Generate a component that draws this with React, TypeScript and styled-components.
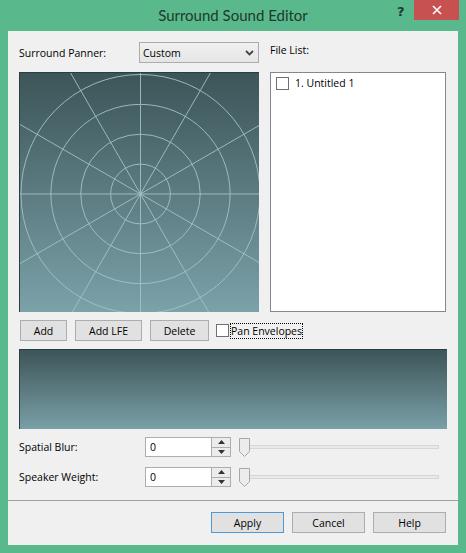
import React from "react";
import styled, { createGlobalStyle } from "styled-components";

const Global = createGlobalStyle`
  html, body { margin: 0; padding: 0; background: #5ab98c; }
  body { font-family: "Open Sans", "Noto Sans", sans-serif; }
  * { box-sizing: border-box; }
`;

const UI_FONT = `"Open Sans", "Noto Sans", sans-serif`;
const TITLE_FONT = `Lato, "Open Sans", sans-serif`;

const Frame = styled.div`
  width: 466px;
  height: 553px;
  background: #5ab98c;
  display: flex;
  flex-direction: column;
  padding: 0 8px 8px 8px;
`;

const TitleBar = styled.div`
  height: 31px;
  display: grid;
  grid-template-columns: 1fr auto 1fr;
  align-items: start;
  margin: 0 -8px;
`;

const TitleText = styled.div`
  grid-column: 2;
  font-family: ${TITLE_FONT};
  font-size: 15px;
  color: #1d3a2d;
  line-height: 31px;
`;

const Controls = styled.div`
  grid-column: 3;
  justify-self: end;
  display: flex;
  align-items: flex-start;
  margin-right: 7px;
`;

const HelpGlyph = styled.div`
  width: 17px;
  height: 21px;
  font-family: "DejaVu Sans", sans-serif;
  font-weight: bold;
  font-size: 13px;
  color: #1d3a2d;
  line-height: 24px;
  text-align: left;
`;

const CloseBtn = styled.div`
  width: 45px;
  height: 20px;
  background: #c75050;
  display: flex;
  align-items: center;
  justify-content: center;
`;

const Client = styled.div`
  flex: 1;
  background: #f0f0f0;
  display: flex;
  flex-direction: column;
`;

const Main = styled.div`
  padding: 11px 12px 13px 11px;
  display: flex;
  flex-direction: column;
`;

const TopGrid = styled.div`
  display: grid;
  grid-template-columns: 240px 176px;
  column-gap: 11px;
  row-gap: 9px;
`;

const LabelRow = styled.div`
  display: flex;
  align-items: center;
  height: 21px;
`;

const Label = styled.span<{ $w?: number }>`
  font-family: ${UI_FONT};
  font-size: 10.5px;
  color: #000;
  width: ${(p) => (p.$w ? `${p.$w}px` : "auto")};
  flex: none;
  white-space: nowrap;
`;

const FileLabel = styled(Label)`
  align-self: flex-start;
  margin-top: 1px;
`;

const Combo = styled.div`
  width: 120px;
  height: 21px;
  border: 1px solid #acacac;
  background: linear-gradient(#f0f0f0, #e5e5e5);
  display: flex;
  align-items: center;
  justify-content: space-between;
  padding: 0 4px 0 3px;
  font-family: ${UI_FONT};
  font-size: 10.5px;
`;

const Panner = styled.div`
  width: 240px;
  height: 240px;
  background: linear-gradient(#3c5558, #7ba1a9);
  border-top: 1px solid #2c3d40;
  border-left: 1px solid #2c3d40;
  overflow: hidden;
  display: flex;
`;

const FileList = styled.div`
  height: 240px;
  background: #fff;
  border: 1px solid #828790;
  padding: 3px 5px;
`;

const FileItem = styled.div`
  display: flex;
  align-items: center;
  gap: 6px;
  font-family: ${UI_FONT};
  font-size: 10.5px;
`;

const Check = styled.span`
  width: 13px;
  height: 13px;
  border: 1px solid #707070;
  background: #fff;
  flex: none;
`;

const ButtonRow = styled.div`
  display: flex;
  align-items: center;
  margin-top: 8px;
  padding-left: 1px;
  gap: 8px;
`;

const Button = styled.div<{ $w: number; $default?: boolean }>`
  width: ${(p) => p.$w}px;
  height: 21px;
  border: 1px solid ${(p) => (p.$default ? "#4d9ad8" : "#adadad")};
  background: #e1e1e1;
  display: flex;
  align-items: center;
  justify-content: center;
  font-family: ${UI_FONT};
  font-size: 10.5px;
  color: #000;
`;

const CheckLabel = styled.div`
  display: flex;
  align-items: center;
  gap: 2px;
  margin-left: -1px;
`;

const Focused = styled.span`
  font-family: ${UI_FONT};
  font-size: 10.5px;
  outline: 1px dotted #000;
  line-height: 14px;
`;

const Strip = styled.div`
  margin-top: 8px;
  height: 80px;
  width: 428px;
  background: linear-gradient(#3c5558, #7a9fa7);
  border-top: 1px solid #2c3d40;
  border-left: 1px solid #2c3d40;
`;

const ParamRow = styled.div<{ $mt: number }>`
  margin-top: ${(p) => p.$mt}px;
  display: flex;
  align-items: center;
  height: 20px;
`;

const Spin = styled.div`
  display: flex;
  height: 20px;
  border: 1px solid #abadb3;
  background: #fff;
  flex: none;
`;

const SpinEdit = styled.div`
  width: 65px;
  padding-left: 4px;
  display: flex;
  align-items: center;
  font-family: ${UI_FONT};
  font-size: 10.5px;
`;

const SpinButtons = styled.div`
  width: 19px;
  border-left: 1px solid #abadb3;
  display: flex;
  flex-direction: column;
  background: #ececec;
`;

const SpinHalf = styled.div<{ $top?: boolean }>`
  flex: 1;
  display: flex;
  align-items: center;
  justify-content: center;
  border-bottom: ${(p) => (p.$top ? "1px solid #adadad" : "none")};
`;

const Slider = styled.div`
  margin-left: 8px;
  width: 200px;
  height: 20px;
  display: flex;
  align-items: center;
  position: relative;
`;

const Track = styled.div`
  flex: 1;
  height: 4px;
  background: #e7eaea;
  border: 1px solid #d6d6d6;
`;

const Thumb = styled.svg`
  position: absolute;
  left: 0;
  top: 1px;
`;

const Separator = styled.div`
  height: 1px;
  background: #a0a0a0;
`;

const Footer = styled.div`
  flex: 1;
  display: flex;
  justify-content: flex-end;
  align-items: flex-start;
  gap: 8px;
  padding: 11px 12px 0 0;
`;

const PannerGrid: React.FC = () => {
  const c = 120;
  const lines = Array.from({ length: 6 }, (_, i) => {
    const a = (i * 30 * Math.PI) / 180;
    const dx = Math.cos(a) * 220;
    const dy = Math.sin(a) * 220;
    return <line key={i} x1={c - dx} y1={c - dy} x2={c + dx} y2={c + dy} />;
  });
  return (
    <svg width="240" height="240" viewBox="-1 -1 240 240" style={{ display: "block" }}>
      <g stroke="#a3c4c8" strokeWidth="1" fill="none" opacity="0.9">
        {[30, 60, 90, 120].map((r) => (
          <circle key={r} cx={c} cy={c} r={r} />
        ))}
        {lines}
      </g>
    </svg>
  );
};

const SpinBox: React.FC<{ value: string }> = ({ value }) => (
  <Spin>
    <SpinEdit>{value}</SpinEdit>
    <SpinButtons>
      <SpinHalf $top>
        <svg width="7" height="4" viewBox="0 0 7 4">
          <path d="M0 4 L3.5 0 L7 4 Z" fill="#333" />
        </svg>
      </SpinHalf>
      <SpinHalf>
        <svg width="7" height="4" viewBox="0 0 7 4">
          <path d="M0 0 L3.5 4 L7 0 Z" fill="#333" />
        </svg>
      </SpinHalf>
    </SpinButtons>
  </Spin>
);

const TrackBar: React.FC = () => (
  <Slider>
    <Track />
    <Thumb width="11" height="19" viewBox="0 0 11 19">
      <path d="M0.5 0.5 H10.5 V13.5 L5.5 18.5 L0.5 13.5 Z" fill="#ececec" stroke="#a7a7a7" />
    </Thumb>
  </Slider>
);

export default function App() {
  return (
    <>
      <Global />
      <Frame>
        <TitleBar>
          <TitleText>Surround Sound Editor</TitleText>
          <Controls>
            <HelpGlyph>?</HelpGlyph>
            <CloseBtn>
              <svg width="10" height="10" viewBox="0 0 10 10">
                <path d="M1 1 L9 9 M9 1 L1 9" stroke="#fff" strokeWidth="1.6" />
              </svg>
            </CloseBtn>
          </Controls>
        </TitleBar>
        <Client>
          <Main>
            <TopGrid>
              <LabelRow>
                <Label $w={120}>Surround Panner:</Label>
                <Combo>
                  <span>Custom</span>
                  <svg width="9" height="6" viewBox="0 0 9 6">
                    <path d="M1 1 L4.5 4.5 L8 1" stroke="#444" strokeWidth="1.8" fill="none" />
                  </svg>
                </Combo>
              </LabelRow>
              <FileLabel>File List:</FileLabel>
              <Panner>
                <PannerGrid />
              </Panner>
              <FileList>
                <FileItem>
                  <Check />
                  <span>1. Untitled 1</span>
                </FileItem>
              </FileList>
            </TopGrid>
            <ButtonRow>
              <Button $w={47}>Add</Button>
              <Button $w={67}>Add LFE</Button>
              <Button $w={59}>Delete</Button>
              <CheckLabel>
                <Check />
                <Focused>Pan Envelopes</Focused>
              </CheckLabel>
            </ButtonRow>
            <Strip />
            <ParamRow $mt={8}>
              <Label $w={126}>Spatial Blur:</Label>
              <SpinBox value="0" />
              <TrackBar />
            </ParamRow>
            <ParamRow $mt={10}>
              <Label $w={126}>Speaker Weight:</Label>
              <SpinBox value="0" />
              <TrackBar />
            </ParamRow>
          </Main>
          <Separator />
          <Footer>
            <Button $w={73} $default>Apply</Button>
            <Button $w={73}>Cancel</Button>
            <Button $w={73}>Help</Button>
          </Footer>
        </Client>
      </Frame>
    </>
  );
}
